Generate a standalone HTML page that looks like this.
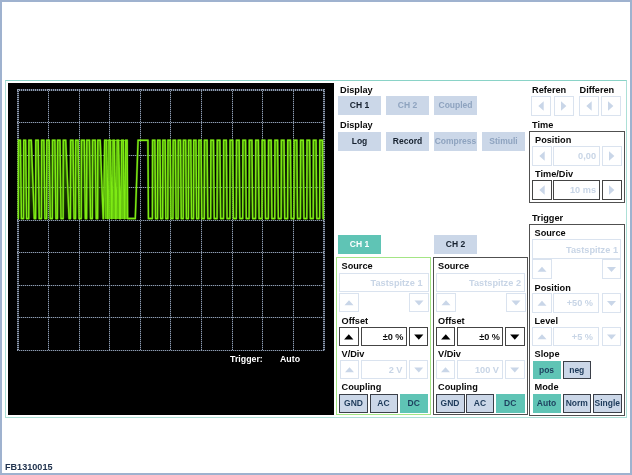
<!DOCTYPE html>
<html><head><meta charset="utf-8"><title>FB1310015</title>
<style>
html,body{margin:0;padding:0;}
body{width:632px;height:475px;position:relative;overflow:hidden;background:#fff;font-family:"Liberation Sans",Arial,sans-serif;font-size:9px;color:#111;}
#frame{position:absolute;left:0;top:0;width:628px;height:471px;border:2px solid #9fb2cf;}
#panel{position:absolute;left:5px;top:80px;width:622px;height:338px;border:1px solid #ace0d7;border-top-color:#8ad3c7;box-sizing:border-box;}
#scope{position:absolute;left:8px;top:83px;width:326px;height:332px;background:#000;}
svg{position:absolute;left:0;top:0;}
#main{will-change:transform;}
.lbl{position:absolute;font-weight:bold;font-size:9.2px;line-height:10px;color:#0a0a0a;white-space:nowrap;}
.btn{position:absolute;box-sizing:border-box;background:#cbd7e8;color:#15202e;font-weight:bold;font-size:8.5px;text-align:center;white-space:nowrap;}
.dis{color:#8ea3bf;}
.on{background:#5fc4b5;color:#fff;}
.bd{border:1px solid #3a3f48;}
.on2{background:#5fc4b5;color:#1d3f5e;}
.nv{color:#1d3a5a;}
.val.dkb{border-color:#444;}
.box{position:absolute;box-sizing:border-box;border:1px solid #dae3ef;background:#fff;}
.box.dk{border-color:#444;}
.val{position:absolute;box-sizing:border-box;border:1px solid #dae3ef;background:#fff;font-weight:bold;font-size:9.2px;text-align:right;color:#c8d5e6;white-space:nowrap;}
.val.dk{border-color:#444;color:#111;}
.grp{position:absolute;box-sizing:border-box;border:1px solid #444;}
.tri{position:absolute;width:0;height:0;}
#cap{position:absolute;left:5px;top:462px;will-change:transform;font-size:9.1px;line-height:10px;color:#22344f;font-weight:bold;letter-spacing:0;}
</style></head><body>
<div id="frame"></div>
<div id="panel"></div>
<div id="scope"></div>
<svg id="main" width="632" height="475" viewBox="0 0 632 475">
<g stroke="#2a323e" stroke-width="1" fill="none" shape-rendering="crispEdges">
<line x1="18" y1="89" x2="18" y2="351" stroke-width="2"/>
<line x1="48.5" y1="89" x2="48.5" y2="351" />
<line x1="79.5" y1="89" x2="79.5" y2="351" />
<line x1="109.5" y1="89" x2="109.5" y2="351" />
<line x1="140.5" y1="89" x2="140.5" y2="351" />
<line x1="170.5" y1="89" x2="170.5" y2="351" />
<line x1="201.5" y1="89" x2="201.5" y2="351" />
<line x1="232.5" y1="89" x2="232.5" y2="351" />
<line x1="262.5" y1="89" x2="262.5" y2="351" />
<line x1="293.5" y1="89" x2="293.5" y2="351" />
<line x1="324" y1="89" x2="324" y2="351" stroke-width="2"/>
<line x1="17" y1="90" x2="325" y2="90" stroke-width="2"/>
<line x1="17" y1="122.5" x2="325" y2="122.5" />
<line x1="17" y1="155.5" x2="325" y2="155.5" />
<line x1="17" y1="187.5" x2="325" y2="187.5" />
<line x1="17" y1="220.5" x2="325" y2="220.5" />
<line x1="17" y1="252.5" x2="325" y2="252.5" />
<line x1="17" y1="285.5" x2="325" y2="285.5" />
<line x1="17" y1="317.5" x2="325" y2="317.5" />
<line x1="17" y1="350.5" x2="325" y2="350.5" />
</g>
<g stroke="#909cae" stroke-width="1" stroke-dasharray="1 1" fill="none" shape-rendering="crispEdges">
<line x1="18" y1="89" x2="18" y2="351" stroke-width="2"/>
<line x1="48.5" y1="89" x2="48.5" y2="351" />
<line x1="79.5" y1="89" x2="79.5" y2="351" />
<line x1="109.5" y1="89" x2="109.5" y2="351" />
<line x1="140.5" y1="89" x2="140.5" y2="351" />
<line x1="170.5" y1="89" x2="170.5" y2="351" />
<line x1="201.5" y1="89" x2="201.5" y2="351" />
<line x1="232.5" y1="89" x2="232.5" y2="351" />
<line x1="262.5" y1="89" x2="262.5" y2="351" />
<line x1="293.5" y1="89" x2="293.5" y2="351" />
<line x1="324" y1="89" x2="324" y2="351" stroke-width="2"/>
<line x1="17" y1="90" x2="325" y2="90" stroke-width="2"/>
<line x1="17" y1="122.5" x2="325" y2="122.5" />
<line x1="17" y1="155.5" x2="325" y2="155.5" />
<line x1="17" y1="187.5" x2="325" y2="187.5" />
<line x1="17" y1="220.5" x2="325" y2="220.5" />
<line x1="17" y1="252.5" x2="325" y2="252.5" />
<line x1="17" y1="285.5" x2="325" y2="285.5" />
<line x1="17" y1="317.5" x2="325" y2="317.5" />
<line x1="17" y1="350.5" x2="325" y2="350.5" />
</g>
<polygon points="104.6,140 127.2,140 127.8,219 105,219" fill="#74de10" opacity="0.92"/>
<defs><linearGradient id="fg" x1="0" y1="140" x2="0" y2="219" gradientUnits="userSpaceOnUse"><stop offset="0" stop-color="#5cb80e" stop-opacity="0.7"/><stop offset="0.5" stop-color="#58b20c" stop-opacity="0.4"/><stop offset="1" stop-color="#58b20c" stop-opacity="0.1"/></linearGradient></defs>
<path d="M18.33,218.50 L18.48,140.30 L20.43,140.30 L21.43,218.50 Z M23.53,218.50 L23.68,140.30 L25.62,140.30 L26.62,218.50 Z M28.73,218.50 L28.88,140.30 L31.32,140.30 L34.27,218.50 Z M35.62,218.50 L35.77,140.30 L38.23,140.30 L39.23,218.50 Z M41.42,218.50 L41.57,140.30 L43.93,140.30 L44.93,218.50 Z M46.62,218.50 L46.77,140.30 L49.23,140.30 L50.23,218.50 Z M52.32,218.50 L52.47,140.30 L54.93,140.30 L55.93,218.50 Z M57.42,218.50 L57.57,140.30 L60.03,140.30 L61.03,218.50 Z M63.12,218.50 L63.27,140.30 L65.73,140.30 L69.08,218.50 Z M70.42,218.50 L70.58,140.30 L73.03,140.30 L74.03,218.50 Z M75.52,218.50 L75.67,140.30 L78.12,140.30 L79.12,218.50 Z M81.22,218.50 L81.38,140.30 L84.33,140.30 L85.33,218.50 Z M86.62,218.50 L86.77,140.30 L89.53,140.30 L90.53,218.50 Z M92.32,218.50 L92.47,140.30 L95.23,140.30 L96.23,218.50 Z M97.62,218.50 L97.77,140.30 L100.23,140.30 L103.17,218.50 Z M103.58,218.50 L104.67,140.30 L106.73,140.30 L107.83,218.50 Z M107.78,218.50 L108.88,140.30 L110.53,140.30 L111.62,218.50 Z M111.88,218.50 L112.97,140.30 L114.42,140.30 L115.52,218.50 Z M115.98,218.50 L117.08,140.30 L118.62,140.30 L119.72,218.50 Z M120.48,218.50 L121.58,140.30 L123.33,140.30 L124.42,218.50 Z M124.58,218.50 L125.67,140.30 L127.12,140.30 L127.62,218.50 Z M152.39,218.50 L152.54,140.30 L154.88,140.30 L155.57,218.50 Z M157.53,218.50 L157.68,140.30 L160.01,140.30 L160.71,218.50 Z M162.67,218.50 L162.82,140.30 L165.16,140.30 L165.85,218.50 Z M167.81,218.50 L167.96,140.30 L170.29,140.30 L170.99,218.50 Z M172.95,218.50 L173.10,140.30 L175.44,140.30 L176.13,218.50 Z M178.09,218.50 L178.24,140.30 L180.57,140.30 L181.27,218.50 Z M183.23,218.50 L183.38,140.30 L185.72,140.30 L186.41,218.50 Z M188.37,218.50 L188.52,140.30 L190.85,140.30 L191.55,218.50 Z M193.51,218.50 L193.66,140.30 L196.00,140.30 L196.69,218.50 Z M198.65,218.50 L198.80,140.30 L201.13,140.30 L201.83,218.50 Z M204.27,218.50 L204.42,140.30 L207.12,140.30 L207.82,218.50 Z M210.67,218.50 L210.82,140.30 L213.53,140.30 L214.23,218.50 Z M217.08,218.50 L217.23,140.30 L219.94,140.30 L220.64,218.50 Z M223.49,218.50 L223.64,140.30 L226.35,140.30 L227.05,218.50 Z M229.90,218.50 L230.05,140.30 L232.76,140.30 L233.46,218.50 Z M236.31,218.50 L236.46,140.30 L239.17,140.30 L239.87,218.50 Z M242.72,218.50 L242.87,140.30 L245.58,140.30 L246.28,218.50 Z M249.13,218.50 L249.28,140.30 L251.99,140.30 L252.69,218.50 Z M255.54,218.50 L255.69,140.30 L258.40,140.30 L259.10,218.50 Z M261.95,218.50 L262.10,140.30 L264.81,140.30 L265.51,218.50 Z M268.36,218.50 L268.51,140.30 L271.21,140.30 L271.91,218.50 Z M274.76,218.50 L274.91,140.30 L277.62,140.30 L278.32,218.50 Z M281.17,218.50 L281.32,140.30 L284.03,140.30 L284.73,218.50 Z M287.58,218.50 L287.73,140.30 L290.44,140.30 L291.14,218.50 Z M293.99,218.50 L294.14,140.30 L296.85,140.30 L297.55,218.50 Z M300.40,218.50 L300.55,140.30 L303.26,140.30 L303.96,218.50 Z M306.81,218.50 L306.96,140.30 L309.67,140.30 L310.37,218.50 Z M313.22,218.50 L313.37,140.30 L316.08,140.30 L316.78,218.50 Z M319.63,218.50 L319.78,140.30 L322.49,140.30 L323.19,218.50 Z" fill="url(#fg)"/>
<polyline points="17.90,218.50 18.33,218.50 18.48,140.30 20.43,140.30 21.43,218.50 23.53,218.50 23.68,140.30 25.62,140.30 26.62,218.50 28.73,218.50 28.88,140.30 31.32,140.30 34.27,218.50 35.62,218.50 35.77,140.30 38.23,140.30 39.23,218.50 41.42,218.50 41.57,140.30 43.93,140.30 44.93,218.50 46.62,218.50 46.77,140.30 49.23,140.30 50.23,218.50 52.32,218.50 52.47,140.30 54.93,140.30 55.93,218.50 57.42,218.50 57.57,140.30 60.03,140.30 61.03,218.50 63.12,218.50 63.27,140.30 65.73,140.30 69.08,218.50 70.42,218.50 70.58,140.30 73.03,140.30 74.03,218.50 75.52,218.50 75.67,140.30 78.12,140.30 79.12,218.50 81.22,218.50 81.38,140.30 84.33,140.30 85.33,218.50 86.62,218.50 86.77,140.30 89.53,140.30 90.53,218.50 92.32,218.50 92.47,140.30 95.23,140.30 96.23,218.50 97.62,218.50 97.77,140.30 100.23,140.30 103.17,218.50 103.58,218.50 104.67,140.30 106.73,140.30 107.83,218.50 107.78,218.50 108.88,140.30 110.53,140.30 111.62,218.50 111.88,218.50 112.97,140.30 114.42,140.30 115.52,218.50 115.98,218.50 117.08,140.30 118.62,140.30 119.72,218.50 120.48,218.50 121.58,140.30 123.33,140.30 124.42,218.50 124.58,218.50 125.67,140.30 127.12,140.30 127.62,218.50 135.28,218.50 138.08,140.30 147.92,140.30 148.42,218.50 152.39,218.50 152.54,140.30 154.88,140.30 155.57,218.50 157.53,218.50 157.68,140.30 160.01,140.30 160.71,218.50 162.67,218.50 162.82,140.30 165.16,140.30 165.85,218.50 167.81,218.50 167.96,140.30 170.29,140.30 170.99,218.50 172.95,218.50 173.10,140.30 175.44,140.30 176.13,218.50 178.09,218.50 178.24,140.30 180.57,140.30 181.27,218.50 183.23,218.50 183.38,140.30 185.72,140.30 186.41,218.50 188.37,218.50 188.52,140.30 190.85,140.30 191.55,218.50 193.51,218.50 193.66,140.30 196.00,140.30 196.69,218.50 198.65,218.50 198.80,140.30 201.13,140.30 201.83,218.50 204.27,218.50 204.42,140.30 207.12,140.30 207.82,218.50 210.67,218.50 210.82,140.30 213.53,140.30 214.23,218.50 217.08,218.50 217.23,140.30 219.94,140.30 220.64,218.50 223.49,218.50 223.64,140.30 226.35,140.30 227.05,218.50 229.90,218.50 230.05,140.30 232.76,140.30 233.46,218.50 236.31,218.50 236.46,140.30 239.17,140.30 239.87,218.50 242.72,218.50 242.87,140.30 245.58,140.30 246.28,218.50 249.13,218.50 249.28,140.30 251.99,140.30 252.69,218.50 255.54,218.50 255.69,140.30 258.40,140.30 259.10,218.50 261.95,218.50 262.10,140.30 264.81,140.30 265.51,218.50 268.36,218.50 268.51,140.30 271.21,140.30 271.91,218.50 274.76,218.50 274.91,140.30 277.62,140.30 278.32,218.50 281.17,218.50 281.32,140.30 284.03,140.30 284.73,218.50 287.58,218.50 287.73,140.30 290.44,140.30 291.14,218.50 293.99,218.50 294.14,140.30 296.85,140.30 297.55,218.50 300.40,218.50 300.55,140.30 303.26,140.30 303.96,218.50 306.81,218.50 306.96,140.30 309.67,140.30 310.37,218.50 313.22,218.50 313.37,140.30 316.08,140.30 316.78,218.50 319.63,218.50 319.78,140.30 322.49,140.30 323.19,218.50 324.00,218.50" fill="none" stroke="#4fa30a" stroke-width="2.3" stroke-linejoin="round" opacity="0.5"/>
<polyline points="17.90,218.50 18.33,218.50 18.48,140.30 20.43,140.30 21.43,218.50 23.53,218.50 23.68,140.30 25.62,140.30 26.62,218.50 28.73,218.50 28.88,140.30 31.32,140.30 34.27,218.50 35.62,218.50 35.77,140.30 38.23,140.30 39.23,218.50 41.42,218.50 41.57,140.30 43.93,140.30 44.93,218.50 46.62,218.50 46.77,140.30 49.23,140.30 50.23,218.50 52.32,218.50 52.47,140.30 54.93,140.30 55.93,218.50 57.42,218.50 57.57,140.30 60.03,140.30 61.03,218.50 63.12,218.50 63.27,140.30 65.73,140.30 69.08,218.50 70.42,218.50 70.58,140.30 73.03,140.30 74.03,218.50 75.52,218.50 75.67,140.30 78.12,140.30 79.12,218.50 81.22,218.50 81.38,140.30 84.33,140.30 85.33,218.50 86.62,218.50 86.77,140.30 89.53,140.30 90.53,218.50 92.32,218.50 92.47,140.30 95.23,140.30 96.23,218.50 97.62,218.50 97.77,140.30 100.23,140.30 103.17,218.50 103.58,218.50 104.67,140.30 106.73,140.30 107.83,218.50 107.78,218.50 108.88,140.30 110.53,140.30 111.62,218.50 111.88,218.50 112.97,140.30 114.42,140.30 115.52,218.50 115.98,218.50 117.08,140.30 118.62,140.30 119.72,218.50 120.48,218.50 121.58,140.30 123.33,140.30 124.42,218.50 124.58,218.50 125.67,140.30 127.12,140.30 127.62,218.50 135.28,218.50 138.08,140.30 147.92,140.30 148.42,218.50 152.39,218.50 152.54,140.30 154.88,140.30 155.57,218.50 157.53,218.50 157.68,140.30 160.01,140.30 160.71,218.50 162.67,218.50 162.82,140.30 165.16,140.30 165.85,218.50 167.81,218.50 167.96,140.30 170.29,140.30 170.99,218.50 172.95,218.50 173.10,140.30 175.44,140.30 176.13,218.50 178.09,218.50 178.24,140.30 180.57,140.30 181.27,218.50 183.23,218.50 183.38,140.30 185.72,140.30 186.41,218.50 188.37,218.50 188.52,140.30 190.85,140.30 191.55,218.50 193.51,218.50 193.66,140.30 196.00,140.30 196.69,218.50 198.65,218.50 198.80,140.30 201.13,140.30 201.83,218.50 204.27,218.50 204.42,140.30 207.12,140.30 207.82,218.50 210.67,218.50 210.82,140.30 213.53,140.30 214.23,218.50 217.08,218.50 217.23,140.30 219.94,140.30 220.64,218.50 223.49,218.50 223.64,140.30 226.35,140.30 227.05,218.50 229.90,218.50 230.05,140.30 232.76,140.30 233.46,218.50 236.31,218.50 236.46,140.30 239.17,140.30 239.87,218.50 242.72,218.50 242.87,140.30 245.58,140.30 246.28,218.50 249.13,218.50 249.28,140.30 251.99,140.30 252.69,218.50 255.54,218.50 255.69,140.30 258.40,140.30 259.10,218.50 261.95,218.50 262.10,140.30 264.81,140.30 265.51,218.50 268.36,218.50 268.51,140.30 271.21,140.30 271.91,218.50 274.76,218.50 274.91,140.30 277.62,140.30 278.32,218.50 281.17,218.50 281.32,140.30 284.03,140.30 284.73,218.50 287.58,218.50 287.73,140.30 290.44,140.30 291.14,218.50 293.99,218.50 294.14,140.30 296.85,140.30 297.55,218.50 300.40,218.50 300.55,140.30 303.26,140.30 303.96,218.50 306.81,218.50 306.96,140.30 309.67,140.30 310.37,218.50 313.22,218.50 313.37,140.30 316.08,140.30 316.78,218.50 319.63,218.50 319.78,140.30 322.49,140.30 323.19,218.50 324.00,218.50" fill="none" stroke="#7eea14" stroke-width="1.4" stroke-linejoin="miter"/>
<polygon points="107.40,141 108.20,141 108.20,192" fill="#102800" opacity="0.85"/>
<polygon points="111.30,141 112.20,141 112.15,192" fill="#102800" opacity="0.85"/>
<polygon points="115.20,141 116.30,141 116.15,192" fill="#102800" opacity="0.85"/>
<polygon points="119.40,141 120.80,141 120.50,192" fill="#102800" opacity="0.85"/>
<polygon points="124.10,141 124.90,141 124.90,192" fill="#102800" opacity="0.85"/>
<text x="230" y="362" fill="#fff" font-family="Liberation Sans, Arial, sans-serif" font-weight="bold" font-size="8.8">Trigger:</text>
<text x="280" y="362" fill="#fff" font-family="Liberation Sans, Arial, sans-serif" font-weight="bold" font-size="8.8">Auto</text>
</svg>
<div id="ui" style="will-change:transform">
<div class="lbl" style="left:340px;top:85px;">Display</div>
<div class="lbl" style="left:340px;top:120px;">Display</div>
<div class="btn " style="left:338px;top:96px;width:43px;height:19px;line-height:19px">CH 1</div>
<div class="btn dis" style="left:386px;top:96px;width:43px;height:19px;line-height:19px">CH 2</div>
<div class="btn dis" style="left:434px;top:96px;width:43px;height:19px;line-height:19px">Coupled</div>
<div class="btn " style="left:338px;top:131.5px;width:43px;height:19px;line-height:19px">Log</div>
<div class="btn " style="left:386px;top:131.5px;width:43px;height:19px;line-height:19px">Record</div>
<div class="btn dis" style="left:434px;top:131.5px;width:43px;height:19px;line-height:19px">Compress</div>
<div class="btn dis" style="left:482px;top:131.5px;width:43px;height:19px;line-height:19px">Stimuli</div>
<div class="lbl" style="left:532px;top:85px;">Referen</div>
<div class="lbl" style="left:579.5px;top:85px;">Differen</div>
<div class="box " style="left:531px;top:96px;width:20px;height:20px"><svg width="18" height="18" style="position:absolute;left:0;top:0"><polygon points="11.7,4.3 11.7,13.7 6.3,9.0" fill="#c9d6e8"/></svg></div>
<div class="box " style="left:554px;top:96px;width:20px;height:20px"><svg width="18" height="18" style="position:absolute;left:0;top:0"><polygon points="6.0,4.3 6.0,13.7 11.4,9.0" fill="#c9d6e8"/></svg></div>
<div class="box " style="left:579px;top:96px;width:20px;height:20px"><svg width="18" height="18" style="position:absolute;left:0;top:0"><polygon points="11.7,4.3 11.7,13.7 6.3,9.0" fill="#c9d6e8"/></svg></div>
<div class="box " style="left:601px;top:96px;width:20px;height:20px"><svg width="18" height="18" style="position:absolute;left:0;top:0"><polygon points="6.0,4.3 6.0,13.7 11.4,9.0" fill="#c9d6e8"/></svg></div>
<div class="lbl" style="left:532px;top:120px;">Time</div>
<div class="grp" style="left:529px;top:131px;width:96px;height:72px;border-color:#505050"></div>
<div class="lbl" style="left:535px;top:135px;">Position</div>
<div class="box " style="left:532px;top:146px;width:20px;height:20px"><svg width="18" height="18" style="position:absolute;left:0;top:0"><polygon points="11.7,4.3 11.7,13.7 6.3,9.0" fill="#c9d6e8"/></svg></div>
<div class="val " style="left:553px;top:146px;width:47px;height:20px;line-height:19px;padding-right:3px">0,00</div>
<div class="box " style="left:602px;top:146px;width:20px;height:20px"><svg width="18" height="18" style="position:absolute;left:0;top:0"><polygon points="6.0,4.3 6.0,13.7 11.4,9.0" fill="#c9d6e8"/></svg></div>
<div class="lbl" style="left:535px;top:169px;">Time/Div</div>
<div class="box dk" style="left:532px;top:180px;width:20px;height:20px"><svg width="18" height="18" style="position:absolute;left:0;top:0"><polygon points="11.7,4.3 11.7,13.7 6.3,9.0" fill="#c9d6e8"/></svg></div>
<div class="val dkb" style="left:553px;top:180px;width:47px;height:20px;line-height:19px;padding-right:3px">10 ms</div>
<div class="box dk" style="left:602px;top:180px;width:20px;height:20px"><svg width="18" height="18" style="position:absolute;left:0;top:0"><polygon points="6.0,4.3 6.0,13.7 11.4,9.0" fill="#c9d6e8"/></svg></div>
<div class="lbl" style="left:532px;top:212.7px;">Trigger</div>
<div class="grp" style="left:529px;top:224px;width:96px;height:192px;border-color:#505050"></div>
<div class="lbl" style="left:534.5px;top:227.8px;">Source</div>
<div class="val " style="left:532px;top:239px;width:89px;height:20px;line-height:20px;padding-right:2px">Tastspitze 1</div>
<div class="box " style="left:532px;top:259px;width:20px;height:20px"><svg width="18" height="18" style="position:absolute;left:0;top:0"><polygon points="4.5,11.7 13.5,11.7 9.0,6.7" fill="#c9d6e8"/></svg></div>
<div class="box " style="left:602px;top:259px;width:19px;height:20px"><svg width="17" height="18" style="position:absolute;left:0;top:0"><polygon points="4.0,6.9 13.0,6.9 8.5,11.9" fill="#c9d6e8"/></svg></div>
<div class="lbl" style="left:534.5px;top:282.7px;">Position</div>
<div class="box " style="left:532px;top:293px;width:20px;height:20px"><svg width="18" height="18" style="position:absolute;left:0;top:0"><polygon points="4.5,11.7 13.5,11.7 9.0,6.7" fill="#c9d6e8"/></svg></div>
<div class="val " style="left:553px;top:293px;width:46px;height:20px;line-height:19px;padding-right:5px">+50 %</div>
<div class="box " style="left:602px;top:293px;width:19px;height:20px"><svg width="17" height="18" style="position:absolute;left:0;top:0"><polygon points="4.0,6.9 13.0,6.9 8.5,11.9" fill="#c9d6e8"/></svg></div>
<div class="lbl" style="left:534.5px;top:316px;">Level</div>
<div class="box " style="left:532px;top:327px;width:20px;height:19px"><svg width="18" height="17" style="position:absolute;left:0;top:0"><polygon points="4.5,11.2 13.5,11.2 9.0,6.2" fill="#c9d6e8"/></svg></div>
<div class="val " style="left:553px;top:327px;width:46px;height:19px;line-height:18px;padding-right:5px">+5 %</div>
<div class="box " style="left:602px;top:327px;width:19px;height:19px"><svg width="17" height="17" style="position:absolute;left:0;top:0"><polygon points="4.0,6.4 13.0,6.4 8.5,11.4" fill="#c9d6e8"/></svg></div>
<div class="lbl" style="left:534.5px;top:348.8px;">Slope</div>
<div class="btn on2" style="left:532.5px;top:360.5px;width:28px;height:18.5px;line-height:18.5px">pos</div>
<div class="btn bd nv" style="left:562.5px;top:360.5px;width:28.5px;height:18.5px;line-height:16.5px">neg</div>
<div class="lbl" style="left:534.5px;top:382.2px;">Mode</div>
<div class="btn on2" style="left:532.5px;top:393.5px;width:28px;height:19px;line-height:19px">Auto</div>
<div class="btn bd nv" style="left:562.5px;top:393.5px;width:28.5px;height:19px;line-height:17px">Norm</div>
<div class="btn bd nv" style="left:593px;top:393.5px;width:28.5px;height:19px;line-height:17px">Single</div>
<div class="btn on" style="left:338px;top:235px;width:43px;height:18.5px;line-height:18.5px">CH 1</div>
<div class="btn " style="left:434px;top:235px;width:43px;height:18.5px;line-height:18.5px">CH 2</div>
<div class="grp" style="left:336px;top:256.5px;width:94.5px;height:158.5px;border-color:#a4e585"></div>
<div class="lbl" style="left:341.5px;top:261px;">Source</div>
<div class="val " style="left:339px;top:273px;width:90px;height:19px;line-height:19px;padding-right:5.5px">Tastspitze 1</div>
<div class="box " style="left:339px;top:293px;width:20px;height:19px"><svg width="18" height="17" style="position:absolute;left:0;top:0"><polygon points="4.5,11.2 13.5,11.2 9.0,6.2" fill="#c9d6e8"/></svg></div>
<div class="box " style="left:409px;top:293px;width:20px;height:19px"><svg width="18" height="17" style="position:absolute;left:0;top:0"><polygon points="4.5,6.4 13.5,6.4 9.0,11.4" fill="#c9d6e8"/></svg></div>
<div class="lbl" style="left:341.5px;top:315.6px;">Offset</div>
<div class="box dk" style="left:339px;top:326.5px;width:19.5px;height:19.5px"><svg width="17.5" height="17.5" style="position:absolute;left:0;top:0"><polygon points="4.1,11.6 13.4,11.6 8.8,6.3" fill="#000"/></svg></div>
<div class="val dk" style="left:360.5px;top:326.5px;width:46px;height:19.5px;line-height:18.5px;padding-right:2px">&plusmn;0 %</div>
<div class="box dk" style="left:408.5px;top:326.5px;width:19.5px;height:19.5px"><svg width="17.5" height="17.5" style="position:absolute;left:0;top:0"><polygon points="4.1,6.5 13.4,6.5 8.8,11.8" fill="#000"/></svg></div>
<div class="lbl" style="left:341.5px;top:348.7px;">V/Div</div>
<div class="box " style="left:339.5px;top:360px;width:19px;height:19px"><svg width="17" height="17" style="position:absolute;left:0;top:0"><polygon points="4.0,11.2 13.0,11.2 8.5,6.2" fill="#c9d6e8"/></svg></div>
<div class="val " style="left:360.5px;top:360px;width:46px;height:19px;line-height:18px;padding-right:3px">2 V</div>
<div class="box " style="left:408.5px;top:360px;width:19.5px;height:19px"><svg width="17.5" height="17" style="position:absolute;left:0;top:0"><polygon points="4.2,6.4 13.2,6.4 8.8,11.4" fill="#c9d6e8"/></svg></div>
<div class="lbl" style="left:341.5px;top:382px;">Coupling</div>
<div class="btn bd nv" style="left:339px;top:394px;width:29px;height:18.5px;line-height:16.5px">GND</div>
<div class="btn bd nv" style="left:369.5px;top:394px;width:28px;height:18.5px;line-height:16.5px">AC</div>
<div class="btn on2" style="left:399.5px;top:394px;width:28.5px;height:18.5px;line-height:18.5px">DC</div>
<div class="grp" style="left:432.5px;top:256.5px;width:95.5px;height:158.5px;border-color:#505050"></div>
<div class="lbl" style="left:438px;top:261px;">Source</div>
<div class="val " style="left:435.5px;top:273px;width:89px;height:19px;line-height:19px;padding-right:2.5px">Tastspitze 2</div>
<div class="box " style="left:435.5px;top:293px;width:20px;height:19px"><svg width="18" height="17" style="position:absolute;left:0;top:0"><polygon points="4.5,11.2 13.5,11.2 9.0,6.2" fill="#c9d6e8"/></svg></div>
<div class="box " style="left:505.5px;top:293px;width:20px;height:19px"><svg width="18" height="17" style="position:absolute;left:0;top:0"><polygon points="4.5,6.4 13.5,6.4 9.0,11.4" fill="#c9d6e8"/></svg></div>
<div class="lbl" style="left:438px;top:315.6px;">Offset</div>
<div class="box dk" style="left:435.5px;top:326.5px;width:19.5px;height:19.5px"><svg width="17.5" height="17.5" style="position:absolute;left:0;top:0"><polygon points="4.1,11.6 13.4,11.6 8.8,6.3" fill="#000"/></svg></div>
<div class="val dk" style="left:457px;top:326.5px;width:46px;height:19.5px;line-height:18.5px;padding-right:2px">&plusmn;0 %</div>
<div class="box dk" style="left:505px;top:326.5px;width:19.5px;height:19.5px"><svg width="17.5" height="17.5" style="position:absolute;left:0;top:0"><polygon points="4.1,6.5 13.4,6.5 8.8,11.8" fill="#000"/></svg></div>
<div class="lbl" style="left:438px;top:348.7px;">V/Div</div>
<div class="box " style="left:436px;top:360px;width:19px;height:19px"><svg width="17" height="17" style="position:absolute;left:0;top:0"><polygon points="4.0,11.2 13.0,11.2 8.5,6.2" fill="#c9d6e8"/></svg></div>
<div class="val " style="left:457px;top:360px;width:46px;height:19px;line-height:18px;padding-right:3px">100 V</div>
<div class="box " style="left:505px;top:360px;width:19.5px;height:19px"><svg width="17.5" height="17" style="position:absolute;left:0;top:0"><polygon points="4.2,6.4 13.2,6.4 8.8,11.4" fill="#c9d6e8"/></svg></div>
<div class="lbl" style="left:438px;top:382px;">Coupling</div>
<div class="btn bd nv" style="left:435.5px;top:394px;width:29px;height:18.5px;line-height:16.5px">GND</div>
<div class="btn bd nv" style="left:466px;top:394px;width:28px;height:18.5px;line-height:16.5px">AC</div>
<div class="btn on2" style="left:496px;top:394px;width:28.5px;height:18.5px;line-height:18.5px">DC</div>
</div>
<div id="cap">FB1310015</div>
</body></html>
